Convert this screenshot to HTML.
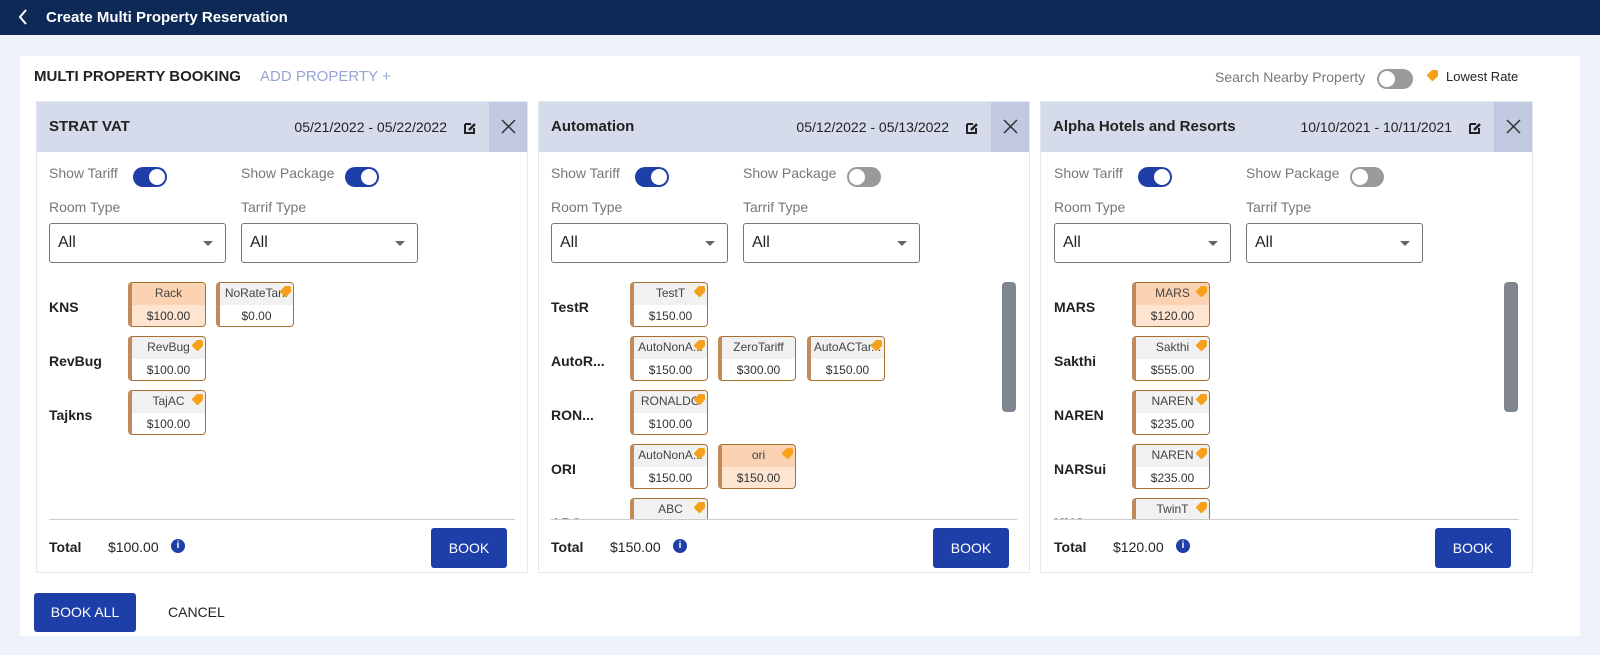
<!DOCTYPE html>
<html><head><meta charset="utf-8"><style>
*{box-sizing:border-box;margin:0;padding:0}
body{width:1600px;height:655px;background:#eef2fa;font-family:"Liberation Sans",sans-serif;position:relative;overflow:hidden;color:#222}
.top{position:absolute;left:0;top:0;width:1600px;height:35px;background:#0d2a56;color:#fff;font-size:15px;font-weight:bold}
.top .t{position:absolute;left:46px;top:9px}
.panel{position:absolute;left:20px;top:56px;width:1560px;height:580px;background:#fff}
.abs{position:absolute}
.card{position:absolute;top:101px;width:492px;height:472px;border:1px solid #e3e8f3;background:#fff}
.hd{position:absolute;left:0;top:0;width:100%;height:50px;background:#d5dbeb}
.hd .n{position:absolute;left:12px;top:16px;font-size:15px;font-weight:bold}
.hd .d{position:absolute;right:80px;top:17px;font-size:14px}
.hd .x{position:absolute;right:0;top:0;width:38px;height:50px;background:#c1c9e0}
.lbl{position:absolute;font-size:14px;color:#777}
.tog{position:absolute;width:34px;height:20px;border-radius:10px;background:#1f3fa8}
.tog::after{content:"";position:absolute;right:2px;top:2px;width:16px;height:16px;border-radius:50%;background:#fff}
.tog.off{background:#9a9a9a}
.tog.off::after{left:2px;right:auto}
.sel{position:absolute;top:121px;width:177px;height:40px;border:1px solid #777;border-radius:3px;font-size:16px;padding:10px 0 0 8px}
.sel::after{content:"";position:absolute;right:12px;top:17px;border:5px solid transparent;border-top:5px solid #666}
.body{position:absolute;left:0;top:170px;width:490px;height:247px;overflow:hidden}
.rn{position:absolute;left:12px;font-size:14px;font-weight:bold}
.tile{position:absolute;width:78px;height:45px;border:1px solid #a8702e;border-left:4px solid #c08a5a;border-radius:4px;font-size:12px;text-align:center;overflow:hidden;background:#fff}
.tile .h{height:22px;background:#f1f1f1;padding-top:3px;white-space:nowrap;overflow:hidden;color:#444}
.tile .p{padding-top:4px;color:#333}
.tile.pk{background:#fde5d2}.tile.pk .h{background:#fbd3b2}
.tg{position:absolute;right:2px;top:3px;width:11px;height:11px;background:#f7a01c;clip-path:polygon(0 45%,45% 0,100% 0,100% 55%,55% 100%,45% 100%,0 55%);border-radius:2px}
.ft{position:absolute;left:12px;top:417px;width:466px;border-top:1px solid #ccc}
.tot{position:absolute;top:437px;font-size:14px}
.info{position:absolute;top:437px;width:14px;height:14px;border-radius:50%;background:#1f3fa8;color:#fff;font-size:10px;font-weight:bold;text-align:center;line-height:14px}
.book{position:absolute;left:394px;top:426px;width:76px;height:40px;background:#1f3fa8;color:#fff;border-radius:3px;font-size:14px;text-align:center;line-height:40px}
.sb{position:absolute;left:463px;top:180px;width:14px;height:130px;border-radius:4px;background:#80868f}
</style></head><body>
<div class="top"><svg class="abs" style="left:18px;top:9px" width="10" height="16"><path d="M8 1L2 8L8 15" stroke="#fff" stroke-width="2" fill="none"/></svg><span class="t">Create Multi Property Reservation</span></div>
<div class="panel"></div>
<div class="abs" style="left:34px;top:68px;font-size:15px;font-weight:bold">MULTI PROPERTY BOOKING</div>
<div class="abs" style="left:260px;top:68px;font-size:15px;color:#97a5d6">ADD PROPERTY +</div>
<div class="abs" style="left:1215px;top:69px;font-size:14px;color:#777">Search Nearby Property</div>
<div class="tog off" style="left:1377px;top:69px;width:36px"></div>
<div class="tg" style="left:1427px;top:70px;right:auto"></div>
<div class="abs" style="left:1446px;top:69px;font-size:13px">Lowest Rate</div>

<!-- card 1 -->
<div class="card" style="left:36px">
<div class="hd"><span class="n">STRAT VAT</span><span class="d">05/21/2022 - 05/22/2022</span>
<svg class="abs" style="right:50px;top:19px" width="14" height="14"><path d="M2 3h6M2 3v9h9V7" stroke="#222" stroke-width="2" fill="none"/><path d="M6 9l6-6" stroke="#222" stroke-width="2.5"/></svg>
<div class="x"><svg style="margin:17px 0 0 12px" width="15" height="15"><path d="M1 1L14 14M14 1L1 14" stroke="#333" stroke-width="1.5"/></svg></div></div>
<div class="lbl" style="left:12px;top:63px">Show Tariff</div><div class="tog" style="left:96px;top:65px"></div>
<div class="lbl" style="left:204px;top:63px">Show Package</div><div class="tog" style="left:308px;top:65px"></div>
<div class="lbl" style="left:12px;top:97px">Room Type</div><div class="lbl" style="left:204px;top:97px">Tarrif Type</div>
<div class="sel" style="left:12px">All</div><div class="sel" style="left:204px">All</div>
<div class="body">
<div class="rn" style="top:27px">KNS</div>
<div class="tile pk" style="left:91px;top:10px"><div class="h">Rack</div><div class="p">$100.00</div></div>
<div class="tile" style="left:179px;top:10px"><div class="h">NoRateTarif</div><div class="p">$0.00</div><span class="tg"></span></div>
<div class="rn" style="top:81px">RevBug</div>
<div class="tile" style="left:91px;top:64px"><div class="h">RevBug</div><div class="p">$100.00</div><span class="tg"></span></div>
<div class="rn" style="top:135px">Tajkns</div>
<div class="tile" style="left:91px;top:118px"><div class="h">TajAC</div><div class="p">$100.00</div><span class="tg"></span></div>
</div>
<div class="ft"></div>
<div class="tot" style="left:12px;font-weight:bold">Total</div><div class="tot" style="left:71px">$100.00</div><div class="info" style="left:134px">i</div>
<div class="book">BOOK</div>
</div>

<!-- card 2 -->
<div class="card" style="left:538px">
<div class="hd"><span class="n">Automation</span><span class="d">05/12/2022 - 05/13/2022</span>
<svg class="abs" style="right:50px;top:19px" width="14" height="14"><path d="M2 3h6M2 3v9h9V7" stroke="#222" stroke-width="2" fill="none"/><path d="M6 9l6-6" stroke="#222" stroke-width="2.5"/></svg>
<div class="x"><svg style="margin:17px 0 0 12px" width="15" height="15"><path d="M1 1L14 14M14 1L1 14" stroke="#333" stroke-width="1.5"/></svg></div></div>
<div class="lbl" style="left:12px;top:63px">Show Tariff</div><div class="tog" style="left:96px;top:65px"></div>
<div class="lbl" style="left:204px;top:63px">Show Package</div><div class="tog off" style="left:308px;top:65px"></div>
<div class="lbl" style="left:12px;top:97px">Room Type</div><div class="lbl" style="left:204px;top:97px">Tarrif Type</div>
<div class="sel" style="left:12px">All</div><div class="sel" style="left:204px">All</div>
<div class="body">
<div class="rn" style="top:27px">TestR</div>
<div class="tile" style="left:91px;top:10px"><div class="h">TestT</div><div class="p">$150.00</div><span class="tg"></span></div>
<div class="rn" style="top:81px">AutoR...</div>
<div class="tile" style="left:91px;top:64px"><div class="h">AutoNonA...</div><div class="p">$150.00</div><span class="tg"></span></div>
<div class="tile" style="left:179px;top:64px"><div class="h">ZeroTariff</div><div class="p">$300.00</div></div>
<div class="tile" style="left:268px;top:64px"><div class="h">AutoACTar...</div><div class="p">$150.00</div><span class="tg"></span></div>
<div class="rn" style="top:135px">RON...</div>
<div class="tile" style="left:91px;top:118px"><div class="h">RONALDO</div><div class="p">$100.00</div><span class="tg"></span></div>
<div class="rn" style="top:189px">ORI</div>
<div class="tile" style="left:91px;top:172px"><div class="h">AutoNonA...</div><div class="p">$150.00</div><span class="tg"></span></div>
<div class="tile pk" style="left:179px;top:172px"><div class="h">ori</div><div class="p">$150.00</div><span class="tg"></span></div>
<div class="rn" style="top:243px">ABC</div>
<div class="tile" style="left:91px;top:226px"><div class="h">ABC</div><div class="p">$150.00</div><span class="tg"></span></div>
</div>
<div class="sb"></div>
<div class="ft"></div>
<div class="tot" style="left:12px;font-weight:bold">Total</div><div class="tot" style="left:71px">$150.00</div><div class="info" style="left:134px">i</div>
<div class="book">BOOK</div>
</div>

<!-- card 3 -->
<div class="card" style="left:1040px;width:493px">
<div class="hd"><span class="n">Alpha Hotels and Resorts</span><span class="d">10/10/2021 - 10/11/2021</span>
<svg class="abs" style="right:50px;top:19px" width="14" height="14"><path d="M2 3h6M2 3v9h9V7" stroke="#222" stroke-width="2" fill="none"/><path d="M6 9l6-6" stroke="#222" stroke-width="2.5"/></svg>
<div class="x"><svg style="margin:17px 0 0 12px" width="15" height="15"><path d="M1 1L14 14M14 1L1 14" stroke="#333" stroke-width="1.5"/></svg></div></div>
<div class="lbl" style="left:13px;top:63px">Show Tariff</div><div class="tog" style="left:97px;top:65px"></div>
<div class="lbl" style="left:205px;top:63px">Show Package</div><div class="tog off" style="left:309px;top:65px"></div>
<div class="lbl" style="left:13px;top:97px">Room Type</div><div class="lbl" style="left:205px;top:97px">Tarrif Type</div>
<div class="sel" style="left:13px">All</div><div class="sel" style="left:205px">All</div>
<div class="body">
<div class="rn" style="left:13px;top:27px">MARS</div>
<div class="tile pk" style="left:91px;top:10px"><div class="h">MARS</div><div class="p">$120.00</div><span class="tg"></span></div>
<div class="rn" style="left:13px;top:81px">Sakthi</div>
<div class="tile" style="left:91px;top:64px"><div class="h">Sakthi</div><div class="p">$555.00</div><span class="tg"></span></div>
<div class="rn" style="left:13px;top:135px">NAREN</div>
<div class="tile" style="left:91px;top:118px"><div class="h">NAREN</div><div class="p">$235.00</div><span class="tg"></span></div>
<div class="rn" style="left:13px;top:189px">NARSui</div>
<div class="tile" style="left:91px;top:172px"><div class="h">NAREN</div><div class="p">$235.00</div><span class="tg"></span></div>
<div class="rn" style="left:13px;top:243px">KNG</div>
<div class="tile" style="left:91px;top:226px"><div class="h">TwinT</div><div class="p">$100.00</div><span class="tg"></span></div>
</div>
<div class="sb"></div>
<div class="ft"></div>
<div class="tot" style="left:13px;font-weight:bold">Total</div><div class="tot" style="left:72px">$120.00</div><div class="info" style="left:135px">i</div>
<div class="book">BOOK</div>
</div>

<div class="abs" style="left:34px;top:593px;width:102px;height:39px;background:#1f3fa8;color:#fff;border-radius:3px;font-size:14px;text-align:center;line-height:39px">BOOK ALL</div>
<div class="abs" style="left:168px;top:604px;font-size:14px">CANCEL</div>
</body></html>
